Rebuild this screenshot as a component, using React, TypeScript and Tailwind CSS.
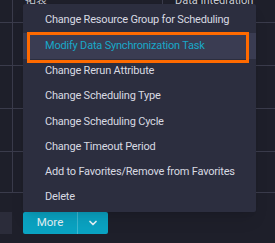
import { ChevronDown } from "lucide-react";

const MENU_ITEMS = [
  "Change Resource Group for Scheduling",
  "Modify Data Synchronization Task",
  "Change Rerun Attribute",
  "Change Scheduling Type",
  "Change Scheduling Cycle",
  "Change Timeout Period",
  "Add to Favorites/Remove from Favorites",
  "Delete",
];

const ROWS = [
  { h: "h-[43px]", first: "拓表", last: "Data Integration" },
  { h: "h-[43px]", first: "", last: "" },
  { h: "h-[43px]", first: "", last: "" },
  { h: "h-[43px]", first: "", last: "" },
  { h: "h-[41px]", first: "", last: "" },
];

export default function App() {
  return (
    <div
      className="relative w-[275px] h-[243px] overflow-hidden bg-[#1e1f2a] text-[11px]"
      style={{ fontFamily: "Roboto, 'Noto Sans CJK SC', sans-serif" }}
    >
      {/* table behind the menu */}
      <div className="mt-[-20px] flex flex-col">
        {ROWS.map((row, i) => (
          <div key={i} className={`${row.h} flex border-b border-[#3a3b4b]`}>
            <div className="w-[13px] border-r border-[#3a3b4b]" />
            <div className="w-[150px] flex items-center pl-[12px] text-[#c9cbd4] border-r border-[#3a3b4b]">
              {row.first}
            </div>
            <div className="flex-1 flex items-center pl-[12px] text-[#c9cbd4] whitespace-nowrap">{row.last}</div>
          </div>
        ))}
      </div>

      {/* footer */}
      <div className="flex items-center gap-[11px] mt-[19px]">
        <div className="w-[12px] h-[22px] bg-[#2b2c3a]" />
        <div className="flex h-[22px] w-[85px] rounded-[2px] bg-[#0aa3c2] text-[#e6f4f8]">
          <div className="w-[54px] flex items-center justify-center text-[11.5px]">More</div>
          <div className="w-px bg-[#3fb8d1]" />
          <div className="flex-1 flex items-center justify-center">
            <ChevronDown size={12} strokeWidth={3.5} />
          </div>
        </div>
      </div>

      {/* dropdown menu */}
      <div className="absolute left-[23px] top-[4px] w-[233px] h-[208px] bg-[#2c2e3f] rounded-[2px] pt-[4px] shadow-lg">
        {MENU_ITEMS.map((label, i) => (
          <div
            key={label}
            className={`h-[25.3px] flex items-center pl-[22px] whitespace-nowrap tracking-[-0.2px] ${
              i === 1 ? "bg-[#3a3c52] text-[#18a8c9]" : "text-[#d8dae2]"
            }`}
          >
            {label}
          </div>
        ))}
        <div className="absolute left-[4px] top-[28px] w-[222px] h-[31px] border-[3px] border-[#ff6a00]" />
      </div>
    </div>
  );
}
